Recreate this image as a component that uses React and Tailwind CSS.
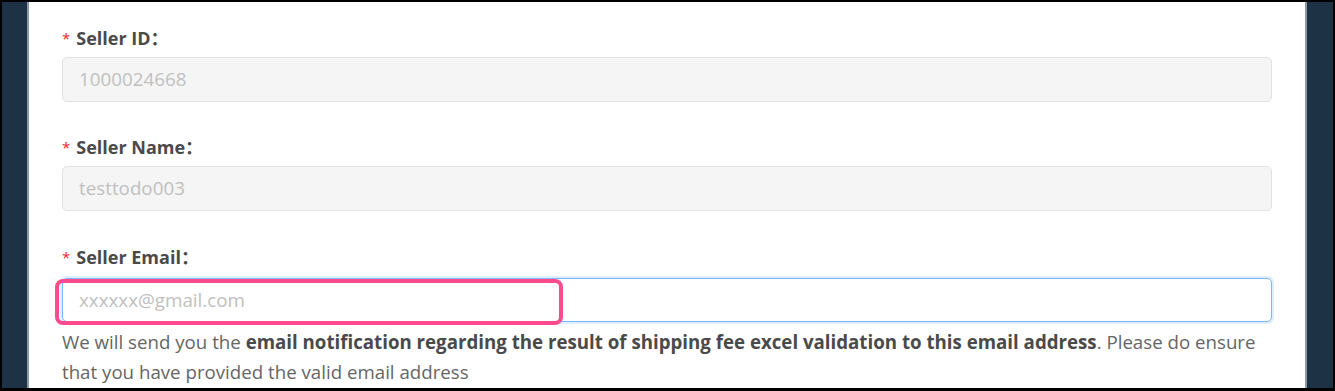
import React from "react";

function Label({ children }) {
  return (
    <div className="flex items-center h-[24px] text-[18px] font-bold text-[#4a4a4a]">
      <span className="text-[#f5222d] mr-[6px] text-[15px] font-normal">*</span>
      <span>{children}</span>
      <span className="font-bold">：</span>
    </div>
  );
}

function DisabledInput({ value }) {
  return (
    <div className="mt-[7px] h-[45px] rounded-[5px] border border-[#e2e2e2] bg-[#f5f5f5] px-[16px] flex items-center text-[18.8px] text-[#c0c0c0]">
      {value}
    </div>
  );
}

export default function App() {
  return (
    <div
      className="h-[391px] w-[1335px] bg-black pt-[2px] pb-[3px] px-[2px]"
      style={{ fontFamily: '"Open Sans", "Noto Sans CJK SC", sans-serif' }}
    >
      <div className="flex h-full bg-[#1e3246]">
        <div className="w-[25px] shrink-0" />
        <div className="flex-1 bg-white border-l-2 border-r-2 border-[#8a9aa8] overflow-hidden">
          <div className="pl-[33px] pr-[33px] pt-[24px]">
            <Label>Seller ID</Label>
            <DisabledInput value="1000024668" />

            <div className="mt-[33px]">
              <Label>Seller Name</Label>
              <DisabledInput value="testtodo003" />
            </div>

            <div className="mt-[34px]">
              <Label>Seller Email</Label>
              <div className="relative mt-[9px]">
                <div className="h-[44px] rounded-[5px] border border-[#7fb6f7] shadow-[0_0_0_2px_rgba(24,144,255,0.15)] bg-white px-[16px] flex items-center text-[18.8px] text-[#c0c0c0]">
                  xxxxxx@gmail.com
                </div>
                <div className="absolute left-[-7px] top-[1px] w-[508px] h-[46px] rounded-[8px] border-[4px] border-[#fb4b8c]" />
              </div>
              <p className="mt-[5px] text-[18.7px] leading-[30px] text-[#666666]">
                We will send you the{" "}
                <b className="text-[#4a4a4a]">
                  email notification regarding the result of shipping fee excel validation to this email address
                </b>
                . Please do ensure that you have provided the valid email address
              </p>
            </div>
          </div>
        </div>
        <div className="w-[26px] shrink-0" />
      </div>
    </div>
  );
}
